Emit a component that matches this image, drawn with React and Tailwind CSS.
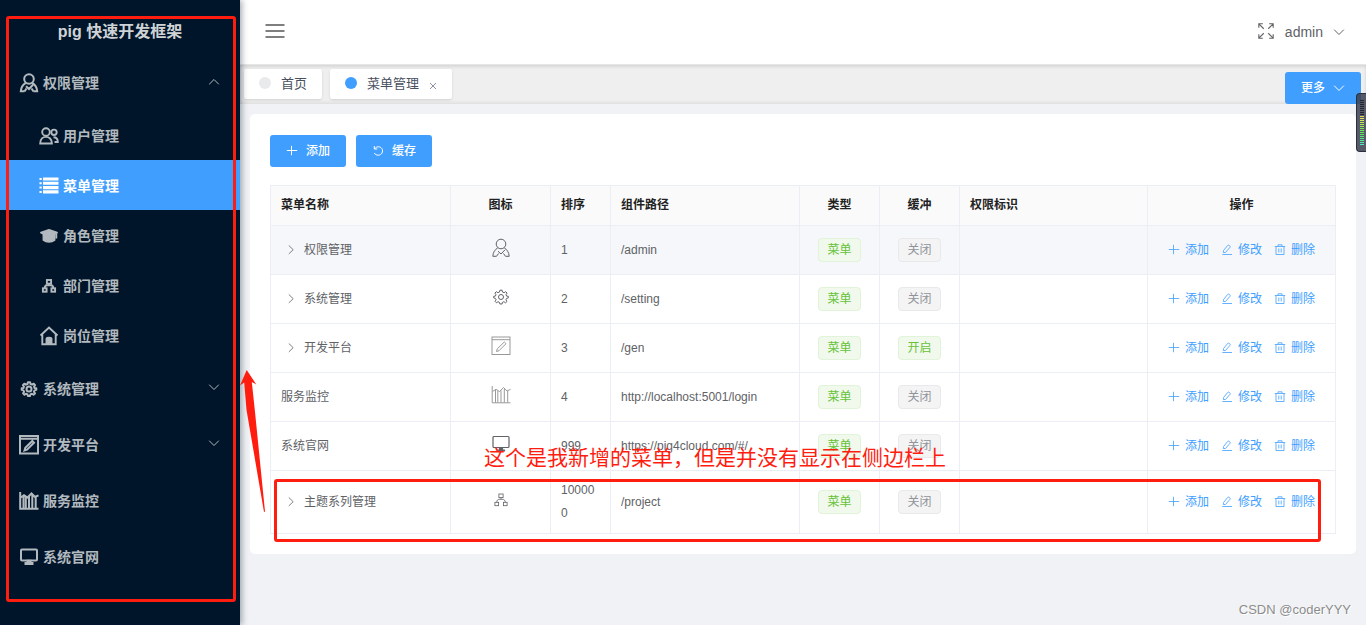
import React from "react";

const RED = "#ff1d10";

function Icon({ children, className = "", box = 20, weight = 1, ...rest }) {
  return (
    <svg
      viewBox={`0 0 ${box} ${box}`}
      className={className}
      fill="none"
      stroke="currentColor"
      strokeWidth={weight}
      aria-hidden="true"
      {...rest}
    >
      {children}
    </svg>
  );
}

const UserIcon = (p) => (
  <Icon {...p}>
    <circle cx="10" cy="6" r="4.8" />
    <path d="M6.8 9.800C4 11.500 2 14.500 1.800 18.300H5.500M13.200 9.800C16 11.500 18 14.500 18.200 18.300H14.500M7 13.200L10 16L14 11.800M5.500 18.300L7.500 15.500M14.500 18.300L12.500 15.500" />
  </Icon>
);

const UsersIcon = (p) => (
  <Icon {...p}>
    <circle cx="7" cy="6" r="3.800" />
    <path d="M1.200 17.500C1.200 13 4 10.900 7 10.900S12.900 13 12.900 17.500Z" />
    <circle cx="15" cy="6.300" r="2.700" />
    <path d="M14.500 11.300C17.500 11.300 18.800 13 18.800 16H15.500" />
  </Icon>
);

const ListIcon = (p) => (
  <Icon {...p}>
    <path strokeWidth="3.100" d="M4 3H19.500M4 7.300H19.500M4 11.600H19.500M4 15.900H19.500" />
    <path strokeWidth="2" d="M.5 3H2.700M.5 7.300H2.700M.5 11.600H2.700M.5 15.900H2.700" />
  </Icon>
);

const CapIcon = (p) => (
  <Icon {...p}>
    <g fill="currentColor" strokeLinejoin="round">
      <path d="M10 4L18 6.700L10 10L2 6.700Z" />
      <path d="M4.500 8V14C7.500 16.300 12.500 16.300 15.500 14V8L10 10Z" />
      <path d="M17.300 7.500V12.500" />
    </g>
  </Icon>
);

const TreeIcon = ({ weight = 0.8, ...p }) => (
  <Icon weight={weight} {...p}>
    <rect x="7.900" y="4" width="4.200" height="3.600" />
    <rect x="3.900" y="12.300" width="3.700" height="3.400" />
    <rect x="12.400" y="12.300" width="3.700" height="3.400" />
    <path d="M10 7.600V9.300M5.700 12.300C5.700 10.300 7 9.400 8 9.300H12C13 9.400 14.300 10.300 14.300 12.300" />
  </Icon>
);

const HomeIcon = (p) => (
  <Icon {...p}>
    <path d="M1.500 9.500L10 1.500L18.500 9.500M3.300 8.500V18.300H16.700V8.500" />
    <path fill="currentColor" d="M7.500 18V12.500C8 11.300 12 11.300 12.500 12.500V18Z" />
  </Icon>
);

const GearIcon = (p) => (
  <Icon {...p}>
    <circle cx="10" cy="10" r="2.500" />
    <path strokeLinejoin="round" d="M8.900 3.200H11.100L11.500 5L13.100 5.700L14.700 4.700L16.100 6.100L15 7.700L15.600 9.100L17.300 9.300V10.900L15.600 11.400L14.900 12.800L16 14.400L14.500 15.800L12.900 14.700L11.400 15.400L11.100 17H8.900L8.500 15.400L7 14.700L5.500 15.800L4.100 14.400L5.100 12.800L4.400 11.400L2.700 10.900V9.300L4.400 9.100L5 7.700L3.900 6.100L5.300 4.700L6.900 5.700L8.500 5Z" />
  </Icon>
);

const EditorIcon = (p) => (
  <Icon {...p}>
    <rect x="1" y="1" width="18" height="17.500" />
    <path d="M1 3.700H19M5.500 15.500L6.300 12.800L13.300 6L15 7.700L8 14.700Z" />
  </Icon>
);

const ChartIcon = (p) => (
  <Icon {...p}>
    <path d="M1.200 1V17.800H19.500" />
    <path d="M1.500 6.500L5 4.300L8.500 6.500L12.500 2.500L16 6L19.500 4.300M4.500 5V17.500M6.800 6V17.500M10 5.500V17.500M13.300 4V17.500M16.700 6V17.500" />
  </Icon>
);

const MonitorIcon = ({ weight = 1.2, ...p }) => (
  <Icon weight={weight} {...p}>
    <rect x="2" y="2.500" width="16" height="11" rx="1" />
    <path fill="currentColor" d="M8.500 13.700H11.500V16H13.500V17H6.500V16H8.500Z" />
  </Icon>
);

const Down = (p) => <Icon box={12} {...p}><path d="M1.200 3.700L6 8.500L10.800 3.700" /></Icon>;
const Up = (p) => <Icon box={12} {...p}><path d="M1.200 8.300L6 3.500L10.800 8.300" /></Icon>;
const Right = (p) => <Icon box={12} {...p}><path d="M3.800 1.500L8.200 5.700L3.800 9.900" /></Icon>;
const Plus = (p) => <Icon box={12} {...p}><path d="M5.500 .8V10.200M.8 5.500H11.200" /></Icon>;
const Pencil = (p) => (
  <Icon box={12} {...p}>
    <path d="M1.300 10.500H11M2.300 8.500L2.500 6.600L6.700 1.400Q7.500 .7 8.300 1.400L8.900 1.900Q9.600 2.700 8.900 3.400L4.500 8.500Z" />
  </Icon>
);
const Trash = (p) => (
  <Icon box={12} {...p}>
    <path d="M.8 2.500H11.200M4 2.300V.8H8V2.300M2 2.700V10.500H10V2.700M4.800 4.500V8.500M7.200 4.500V8.500" />
  </Icon>
);
const Refresh = (p) => (
  <Icon box={12} {...p}>
    <path d="M2.300 1V4H5.300M2.700 3.800C4.200 1.300 8 1 9.900 3.600C11.600 6.600 9.700 10.200 6.200 10.200C4.400 10.200 3 9.300 2.300 8" />
  </Icon>
);

const subMenus = [
  { label: "用户管理", icon: UsersIcon },
  { label: "菜单管理", icon: ListIcon, active: true },
  { label: "角色管理", icon: CapIcon },
  { label: "部门管理", icon: TreeIcon },
  { label: "岗位管理", icon: HomeIcon },
];

const lowerMenus = [
  { label: "系统管理", icon: GearIcon, nested: true },
  { label: "开发平台", icon: EditorIcon, nested: true },
  { label: "服务监控", icon: ChartIcon },
  { label: "系统官网", icon: MonitorIcon },
];

const rows = [
  { name: "权限管理", nested: true, icon: UserIcon, sort: "1", path: "/admin", hover: true },
  { name: "系统管理", nested: true, icon: GearIcon, sort: "2", path: "/setting" },
  { name: "开发平台", nested: true, icon: EditorIcon, light: true, sort: "3", path: "/gen", cached: true },
  { name: "服务监控", icon: ChartIcon, light: true, sort: "4", path: "http://localhost:5001/login" },
  { name: "系统官网", icon: MonitorIcon, sort: "999", path: "https://pig4cloud.com/#/" },
  { name: "主题系列管理", nested: true, icon: TreeIcon, sort: "100000", path: "/project" },
];

function MenuLink({ label, icon: Glyph, open, nested }) {
  return (
    <a href="#" className="flex h-14 items-center gap-1 pl-[19px] pr-5 pt-[2px] text-[#b2b9bf]">
      <Glyph className="size-5" weight={2} />
      <span className="flex-1">{label}</span>
      {open && <Up className="mb-[2px] size-3" />}
      {nested && <Down className="mb-1 size-3" />}
    </a>
  );
}

function Sidebar() {
  return (
    <aside className="z-10 w-60 shrink-0 bg-[#001529] text-sm font-bold shadow-[2px_0_6px_rgba(0,21,41,0.35)]">
      <h1 className="flex h-[54px] items-center justify-center pt-[10px] text-base text-[#cfd3d6]">pig 快速开发框架</h1>
      <nav>
        <MenuLink label="权限管理" icon={UserIcon} open />
        {subMenus.map(({ label, icon: Glyph, active }) => (
          <a
            key={label}
            href="#"
            className={`flex h-[50px] items-center gap-1 pl-[39px] pt-[2px] ${active ? "bg-[#409eff] text-white" : "text-[#b2b9bf]"}`}
          >
            <Glyph className="size-5" weight={1.9} />
            {label}
          </a>
        ))}
        {lowerMenus.map((m) => (
          <MenuLink key={m.label} {...m} />
        ))}
      </nav>
    </aside>
  );
}

function Header() {
  return (
    <header className="flex h-[65px] items-center justify-between border-b border-[#e6e6e6] bg-white pb-[2px] pl-[25px] pr-[21px] text-sm text-[#606266]">
      <button type="button" aria-label="折叠菜单">
        <Icon className="size-5" weight={1.6} stroke="#555">
          <path d="M.5 4H19.500M.5 10H19.500M.5 16H19.500" />
        </Icon>
      </button>
      <div className="flex items-center gap-[10px]">
        <button type="button" aria-label="全屏">
          <Icon className="size-[18px]" weight={1.200}>
            <path d="M2 6.500V2H6.500M2 2L7.500 7.500M13.500 2H18V6.500M18 2L12.500 7.500M2 13.500V18H6.500M2 18L7.500 12.500M18 13.500V18H13.500M18 18L12.500 12.500" />
          </Icon>
        </button>
        <button type="button" className="flex items-center gap-[10px] pt-[2px]">
          admin
          <Down className="size-3" />
        </button>
      </div>
    </header>
  );
}

function TabBar() {
  return (
    <div className="flex h-[39px] items-start justify-between bg-[#efefef] pl-1 pr-[5px] shadow-[inset_0_2px_3px_rgba(0,0,0,0.1),inset_0_-2px_3px_rgba(0,0,0,0.06)]">
      <div className="flex gap-2 pt-1 text-[13px] text-[#495060]">
        <a href="#" className="flex h-[30px] items-center gap-[10px] rounded-[2px] bg-white px-[15px] shadow-sm">
          <span className="mb-[2px] size-3 rounded-full bg-[#e8eaec]" />
          首页
        </a>
        <div className="flex h-[30px] items-center gap-[10px] rounded-[2px] bg-white px-[15px] shadow-sm">
          <span className="mb-[2px] size-3 rounded-full bg-[#409eff]" />
          <a href="#">菜单管理</a>
          <button type="button" aria-label="关闭标签" className="pt-1">
            <Icon box={8} className="size-2" weight={0.9} stroke="#808695">
              <path d="M1 1L7 7M7 1L1 7" />
            </Icon>
          </button>
        </div>
      </div>
      <button type="button" className="mt-[7px] flex h-8 items-center gap-2 rounded-[3px] bg-[#409eff] px-4 text-xs font-medium text-white">
        更多
        <Down className="size-3" />
      </button>
    </div>
  );
}

function Tag({ green, children }) {
  return (
    <span
      className={`inline-flex h-6 items-center rounded border px-2 ${
        green ? "border-[#e1f3d8] bg-[#f0f9eb] text-[#67c23a]" : "border-[#e9e9eb] bg-[#f4f4f5] text-[#909399]"
      }`}
    >
      {children}
    </span>
  );
}

const actions = [
  { label: "添加", icon: Plus },
  { label: "修改", icon: Pencil },
  { label: "删除", icon: Trash },
];

const cell = "border-b border-r border-[#ebeef5] px-[10px]";

function MenuTable() {
  return (
    <table className="w-full table-fixed border-separate border-spacing-0 border-l border-t border-[#ebeef5] text-left text-xs leading-[23px] text-[#606266]">
      <colgroup>
        <col className="w-[180px]" />
        <col className="w-[100px]" />
        <col className="w-[60px]" />
        <col className="w-[189px]" />
        <col className="w-[80px]" />
        <col className="w-[80px]" />
        <col />
        <col />
      </colgroup>
      <thead>
        <tr className="h-10 bg-[#fafafa] text-[#222]">
          <th className={cell}>菜单名称</th>
          <th className={`${cell} text-center`}>图标</th>
          <th className={cell}>排序</th>
          <th className={cell}>组件路径</th>
          <th className={`${cell} text-center`}>类型</th>
          <th className={`${cell} text-center`}>缓冲</th>
          <th className={cell}>权限标识</th>
          <th className={`${cell} text-center`}>操作</th>
        </tr>
      </thead>
      <tbody>
        {rows.map(({ name, nested, icon: Glyph, light, sort, path, hover, cached }) => (
          <tr key={name} className={hover ? "h-[49px] bg-[#f5f7fa]" : "h-[49px]"}>
            <td className={cell}>
              <div className="flex items-center gap-[3px]">
                {nested && (
                  <button type="button" aria-label="展开" className="flex w-5 justify-center">
                    <Right className="size-3" weight={0.8} />
                  </button>
                )}
                {name}
              </div>
            </td>
            <td className={cell}>
              <Glyph className={`mx-auto mb-1 size-5 ${light ? "text-[#999]" : "text-[#606266]"}`} />
            </td>
            <td className={`${cell} break-all py-2`}>{sort}</td>
            <td className={cell}>{path}</td>
            <td className={cell}>
              <div className="flex justify-center"><Tag green>菜单</Tag></div>
            </td>
            <td className={cell}>
              <div className="flex justify-center"><Tag green={cached}>{cached ? "开启" : "关闭"}</Tag></div>
            </td>
            <td className={cell} />
            <td className={cell}>
              <div className="flex justify-center gap-3 text-[#409eff]">
                {actions.map(({ label, icon: Act }) => (
                  <button key={label} type="button" className="flex items-center gap-[5px]">
                    <Act className="size-3" weight={0.8} />
                    {label}
                  </button>
                ))}
              </div>
            </td>
          </tr>
        ))}
      </tbody>
    </table>
  );
}

function Annotations() {
  return (
    <div className="pointer-events-none absolute inset-0 z-20">
      <div className="absolute left-[6px] top-[16px] h-[586px] w-[230px] rounded-[3px] border-[3px] border-[#ff1d10]" />
      <div className="absolute left-[274px] right-[45px] top-[479px] h-[63px] rounded-[3px] border-[3px] border-[#ff1d10]" />
      <svg className="absolute left-[240px] top-[370px] h-[143px] w-[26px]" viewBox="0 0 26 143" fill={RED} aria-hidden="true">
        <path d="M6.700 0L16.300 14.500L11.800 12L14.800 40L25 141.500L24 142L6.500 40L4.200 12.500L0 15.500Z" />
      </svg>
      <p className="absolute left-[484px] top-[443px] whitespace-nowrap text-[21px] leading-[30px] text-[#ff1d10]">
        这个是我新增的菜单，但是并没有显示在侧边栏上
      </p>
    </div>
  );
}

function LevelMeter() {
  return (
    <div className="absolute right-0 top-[93px] z-20 flex h-[59px] w-[10px] flex-col items-end gap-px rounded-l-[4px] border border-r-0 border-[#2b2f3a] bg-[#3c4150]/85 pr-[2px] pt-[6px]">
      {Array.from({ length: 23 }, (_, i) => (
        <span
          key={i}
          className="h-px w-1 shrink-0"
          style={{ backgroundColor: i < 8 ? "#23252e" : `hsl(${52 + (i - 8) * 8}, 75%, 62%)` }}
        />
      ))}
    </div>
  );
}

export default function App() {
  return (
    <div className="relative flex min-h-screen bg-[#f0f2f5] font-['Liberation_Sans','Noto_Sans_CJK_SC',sans-serif]">
      <Sidebar />
      <div className="min-w-0 flex-1">
        <Header />
        <TabBar />
        <main className="mx-[10px] mt-[10px] rounded-[5px] bg-white px-5 pb-5 pt-[21px]">
          <div className="mb-[18px] flex gap-[10px] text-xs font-medium text-white">
            <button type="button" className="flex h-8 items-center gap-2 rounded-[3px] bg-[#409eff] px-4">
              <Plus className="size-3" />
              添加
            </button>
            <button type="button" className="flex h-8 items-center gap-2 rounded-[3px] bg-[#409eff] px-4">
              <Refresh className="size-3" />
              缓存
            </button>
          </div>
          <MenuTable />
        </main>
      </div>
      <Annotations />
      <LevelMeter />
      <span className="absolute bottom-[5px] right-[15px] text-[13px] leading-5 text-[#8c8c8c] [text-shadow:1px_1px_0_#fff]">
        CSDN @coderYYY
      </span>
    </div>
  );
}
